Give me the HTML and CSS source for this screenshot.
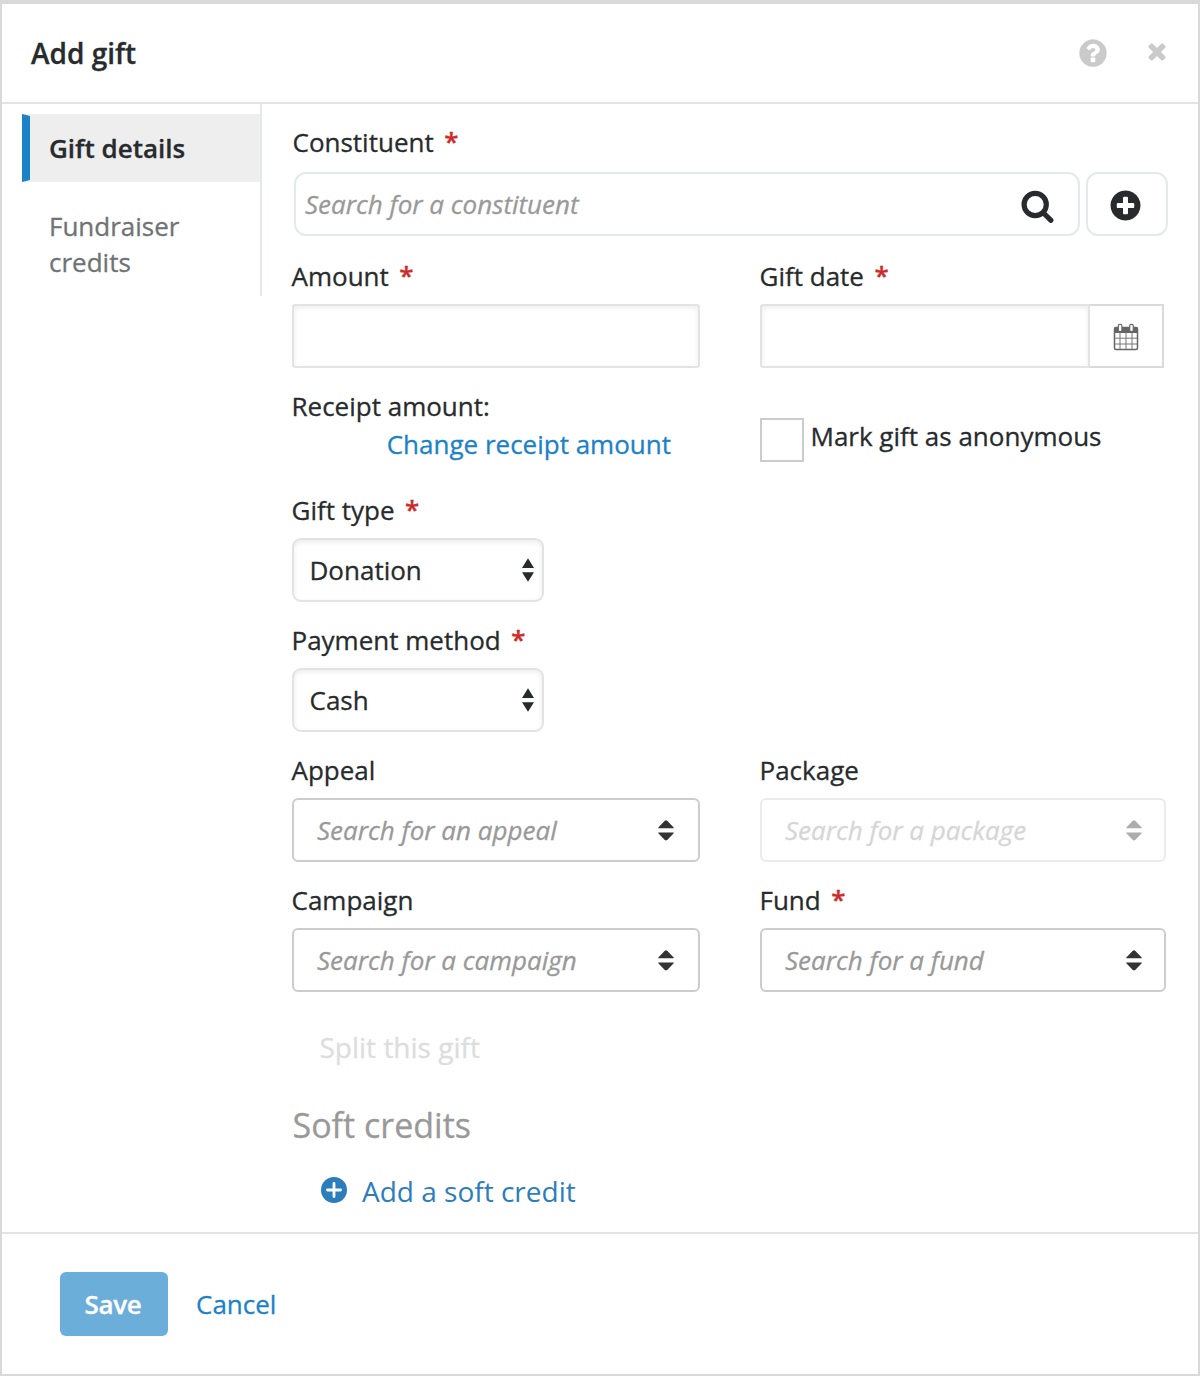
FILE: index.html
```html
<!DOCTYPE html>
<html lang="en">
<head>
<meta charset="utf-8">
<title>Add gift</title>
<link rel="stylesheet" href="styles.css">
</head>
<body>
<svg class="defs" width="0" height="0" aria-hidden="true">
  <symbol id="sort" viewBox="0 0 16 21"><path d="M0.3 8.3V7.6L6.8.7Q8 0 9.2.7L15.700 7.600V8.300ZM.3 12.500V13.200L6.800 20.100Q8 20.800 9.200 20.100L15.700 13.200V12.500Z"/></symbol>
  <symbol id="updown" viewBox="0 0 12 24"><path d="M6 .3 12 10H0ZM0 14.200H12L6 23.700Z"/></symbol>
</svg>
<main class="modal">
  <header class="modal-header">
    <h1 class="title">Add gift</h1>
    <div class="header-actions">
      <svg class="help" viewBox="0 0 1792 1792"><path d="M1024 1376v-192q0-14-9-23t-23-9h-192q-14 0-23 9t-9 23v192q0 14 9 23t23 9h192q14 0 23-9t9-23zm256-672q0-88-55.500-163t-138.500-116-170-41q-243 0-371 213-15 24 8 42l132 100q7 6 19 6 16 0 25-12 53-68 86-92 34-24 86-24 48 0 85.500 26t37.500 59q0 38-20 61t-68 45q-63 28-115.500 86.500t-52.500 125.500v36q0 14 9 23t23 9h192q14 0 23-9t9-23q0-19 21.500-49.500t54.500-49.500q32-18 49-28.500t46-35 44.500-48 28-60.500 12.500-81zm384 192q0 209-103 385.500t-279.500 279.500-385.500 103-385.500-103-279.500-279.500-103-385.500 103-385.500 279.500-279.500 385.500-103 385.500 103 279.500 279.500 103 385.500z"/></svg>
      <svg class="close" viewBox="0 0 1792 1792"><path d="M1490 1322q0 40-28 68l-136 136q-28 28-68 28t-68-28l-294-294-294 294q-28 28-68 28t-68-28l-136-136q-28-28-28-68t28-68l294-294-294-294q-28-28-28-68t28-68l136-136q28-28 68-28t68 28l294 294 294-294q28-28 68-28t68 28l136 136q28 28 28 68t-28 68l-294 294 294 294q28 28 28 68z"/></svg>
    </div>
  </header>

  <div class="modal-body">
    <nav class="tabs">
      <a class="tab active"><span class="tab-text">Gift details</span></a>
      <a class="tab">Fundraiser credits</a>
    </nav>

    <form class="form">
      <div class="field constituent">
        <label class="label">Constituent<b class="req">*</b></label>
        <div class="search-row">
          <div class="search-box"><span class="placeholder">Search for a constituent</span>
            <svg class="search-icon" viewBox="0 0 34 34"><circle cx="14.200" cy="14.500" r="11.100"/><path d="M22.500 23 30 30.300"/></svg>
          </div>
          <div class="add-button"><svg class="plus" viewBox="0 0 1792 1792"><path d="M1344 960v-128q0-26-19-45t-45-19h-256v-256q0-26-19-45t-45-19h-128q-26 0-45 19t-19 45v256h-256q-26 0-45 19t-19 45v128q0 26 19 45t45 19h256v256q0 26 19 45t45 19h128q26 0 45-19t19-45v-256h256q26 0 45-19t19-45zm320-64q0 209-103 385.500t-279.500 279.500-385.500 103-385.500-103-279.500-279.500-103-385.500 103-385.500 279.500-279.500 385.500-103 385.500 103 279.500 279.500 103 385.500z"/></svg></div>
        </div>
      </div>

      <div class="row">
        <div class="field">
          <label class="label">Amount<b class="req">*</b></label>
          <div class="input"></div>
        </div>
        <div class="field">
          <label class="label">Gift date<b class="req">*</b></label>
          <div class="date">
            <div class="input"></div>
            <div class="date-button">
              <svg class="calendar" viewBox="0 0 26 28">
                <path class="cal-head" d="M1 10V6Q1 4 3 4H23Q25 4 25 6V10Z"/>
                <rect class="cal-frame" x="1.500" y="4.500" width="23" height="22" rx="1.500"/>
                <path class="cal-grid" d="M7 10V26M13 10V26M19 10V26M2 15.200H24M2 21H24"/>
                <rect class="cal-ring" x="5.300" y="1.300" width="3.600" height="7.200" rx="1.600"/>
                <rect class="cal-ring" x="16.700" y="1.300" width="3.600" height="7.200" rx="1.600"/>
              </svg>
            </div>
          </div>
        </div>
      </div>

      <div class="row receipt">
        <div class="receipt-info">
          <span class="label">Receipt amount:</span>
          <a class="link change">Change receipt amount</a>
        </div>
        <label class="check"><span class="checkbox"></span><span class="check-text">Mark gift as anonymous</span></label>
      </div>

      <div class="field">
        <label class="label">Gift type<b class="req">*</b></label>
        <div class="select">Donation<svg class="updown"><use href="#updown"/></svg></div>
      </div>
      <div class="field">
        <label class="label">Payment method<b class="req">*</b></label>
        <div class="select">Cash<svg class="updown"><use href="#updown"/></svg></div>
      </div>

      <div class="row">
        <div class="field">
          <label class="label">Appeal</label>
          <div class="lookup"><span class="placeholder">Search for an appeal</span><svg class="sort"><use href="#sort"/></svg></div>
        </div>
        <div class="field">
          <label class="label">Package</label>
          <div class="lookup narrow disabled"><span class="placeholder">Search for a package</span><svg class="sort"><use href="#sort"/></svg></div>
        </div>
      </div>
      <div class="row">
        <div class="field">
          <label class="label">Campaign</label>
          <div class="lookup"><span class="placeholder">Search for a campaign</span><svg class="sort"><use href="#sort"/></svg></div>
        </div>
        <div class="field">
          <label class="label">Fund<b class="req">*</b></label>
          <div class="lookup narrow"><span class="placeholder">Search for a fund</span><svg class="sort"><use href="#sort"/></svg></div>
        </div>
      </div>

      <a class="split">Split this gift</a>
      <h2 class="subtitle">Soft credits</h2>
      <a class="add-credit">
        <svg class="credit-icon" viewBox="0 0 26 26"><circle cx="13" cy="13" r="13"/><path d="M13 6.500V19.500M6.500 13H19.500"/></svg>
        <span>Add a soft credit</span>
      </a>
    </form>
  </div>

  <footer class="modal-footer">
    <button class="save" type="button">Save</button>
    <a class="link cancel">Cancel</a>
  </footer>
</main>
</body>
</html>
```
FILE: styles.css
```css
* { box-sizing: border-box; }

body {
  margin: 0;
  background: #fff;
  color: #282b2d;
  font: 26px/36px "Open Sans", sans-serif;
  -webkit-text-stroke: .3px;
}

svg { display: block; flex: none; }
.defs { position: absolute; }

.modal {
  display: flex;
  flex-direction: column;
  width: 1200px;
  height: 1376px;
  border: 2px solid #d9d9d9;
  border-top-width: 4px;
}

.modal-header {
  display: flex;
  justify-content: space-between;
  height: 100px;
  padding: 30px 28px 0 29px;
  border-bottom: 2px solid #e2e3e4;
}
.title { margin: 0; font-size: 28px; line-height: 38px; font-weight: 600; }
.header-actions { display: flex; gap: 35px; fill: #cacaca; }
.help { width: 32px; height: 32px; margin-top: 2.500px; }
.close { width: 26px; height: 26px; margin-top: 3.500px; }

.modal-body { display: flex; flex: 1; align-items: flex-start; padding-left: 20px; }

.tabs {
  display: flex;
  flex-direction: column;
  gap: 10px;
  width: 240px;
  padding-top: 10px;
  border-right: 2px solid #e4e7eb;
}
.tab { padding: 16px 40px 16px 27px; color: #6f7374; }
.active {
  padding: 14px 0 14px 19px;
  border: solid #eee;
  border-width: 2px 0;
  border-left: 8px solid #1b82c8;
  background: #eee;
  color: #282b2d;
  font-weight: 600;
}

.form { width: 876px; margin-left: 30px; padding-top: 20px; }
.row { display: grid; grid-template-columns: 408px 406px; column-gap: 60px; }
.field { margin-bottom: 20px; }
.label { display: block; height: 36px; margin: 0 0 10px -.5px; white-space: nowrap; }
.req { margin-left: 10.500px; color: #cd2a2a; font-weight: 600; line-height: 1; vertical-align: 1px; }
.placeholder { color: #999; font-style: italic; }

.constituent { margin-bottom: 22px; }
.constituent .label { margin: 0 0 12px .5px; }
.search-row { display: flex; gap: 6px; padding-left: 2px; }
.search-box, .add-button {
  display: flex;
  align-items: center;
  height: 64px;
  border: 2px solid #e4e9ed;
  border-radius: 12px;
}
.search-box { flex: 1; justify-content: space-between; padding: 0 23px 0 9px; }
.search-icon { width: 34px; height: 34px; margin-top: 6px; fill: none; stroke: #282b2d; stroke-width: 5.200; stroke-linecap: round; }
.add-button { width: 82px; justify-content: center; }
.plus { width: 35px; height: 35px; margin: 2px 3px 0 0; fill: #282b2d; }

.input {
  height: 64px;
  border: 2px solid #e3e3e3;
  border-radius: 3px;
  box-shadow: inset 0 2px 5px rgba(0, 0, 0, .08);
}
.date { display: flex; width: 404px; }
.date .input { flex: 1; border-radius: 3px 0 0 3px; }
.date-button {
  display: flex;
  align-items: center;
  justify-content: center;
  width: 74px;
  border: 2px solid #dadada;
  border-left: 0;
}
.calendar { width: 26px; height: 28px; margin: 1px 1px 0 0; }
.cal-head { fill: #666; }
.cal-frame { fill: none; stroke: #666; stroke-width: 1.500; }
.cal-grid { fill: none; stroke: #777; stroke-width: 1; }
.cal-ring { fill: #fff; stroke: #666; stroke-width: 1.200; }

.receipt { height: 104px; }
.receipt-info { display: flex; flex-direction: column; padding-right: 29px; }
.receipt-info .label { margin-bottom: 2px; }
.link { color: #1b82c8; }
.change { align-self: flex-end; white-space: nowrap; }
.check { display: flex; gap: 6.500px; padding-top: 30px; white-space: nowrap; }
.checkbox { width: 44px; height: 44px; border: 2px solid #ccc; }

.select {
  display: flex;
  align-items: center;
  justify-content: space-between;
  width: 252px;
  height: 64px;
  padding: 0 8px 0 15.500px;
  border: 2px solid #e3e3e3;
  border-radius: 9px;
  box-shadow: inset 0 2px 5px rgba(0, 0, 0, .08);
}
.updown { width: 12px; height: 24px; fill: #282b2d; }

.lookup {
  display: flex;
  align-items: center;
  justify-content: space-between;
  height: 64px;
  padding: 0 24px 0 23px;
  border: 2px solid #ccc;
  border-radius: 6px;
}
.narrow { padding-right: 22.500px; }
.sort { width: 16px; height: 21px; margin-top: 1px; fill: #333; }
.disabled { border-color: #ebebeb; }
.disabled .placeholder { color: #d6d6d6; }
.disabled .sort { fill: #adadad; }

.split { display: block; margin: 16px 0 0 27.500px; color: #ddd; font-size: 28px; line-height: 38px; }
.subtitle { margin: 36px 0 0 .5px; color: #999; font-size: 34px; line-height: 46px; font-weight: 400; }
.add-credit { display: flex; align-items: flex-start; gap: 15.500px; margin: 24px 0 0 28.500px; color: #2b7dbc; font-size: 28px; line-height: 38px; -webkit-text-stroke: 0; }
.credit-icon { width: 26px; height: 26px; margin-top: 4.500px; fill: #2b7dbc; }
.credit-icon path { stroke: #fff; stroke-width: 2.800; stroke-linecap: round; }

.modal-footer {
  display: flex;
  align-items: flex-start;
  gap: 28px;
  height: 142px;
  padding: 38px 58px 0;
  border-top: 2px solid #e2e3e4;
}
.save {
  width: 108px;
  height: 64px;
  padding: 0 2px 0 0;
  border: 0;
  border-radius: 6px;
  background: #6baed9;
  color: #fff;
  font: 600 26px/36px "Open Sans", sans-serif;
  letter-spacing: -.3px;
}
.cancel { margin-top: 14px; }
```
